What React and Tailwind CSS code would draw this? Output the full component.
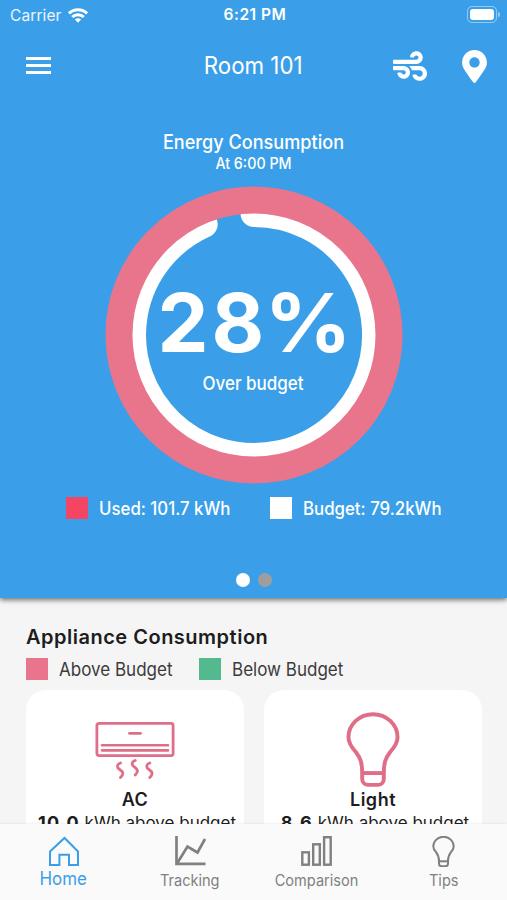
import clsx from 'clsx';
import React from 'react';
import { FaMapMarkerAlt, FaWind } from 'react-icons/fa';

const tabs = [
  { label: 'Home', icon: HomeIcon, active: true },
  { label: 'Tracking', icon: TrackingIcon },
  { label: 'Comparison', icon: BarsIcon },
  { label: 'Tips', icon: BulbIcon, iconClass: 'h-[31px] w-[23px]', stroke: 5 },
];

export default function App() {
  return (
    <div className="flex h-[900px] w-[507px] flex-col overflow-hidden bg-[#f5f5f5] font-[Inter,'Liberation_Sans',sans-serif] text-[#1d1d1d]">
      <section className="relative z-10 flex h-[598px] shrink-0 flex-col bg-[#3a9fe8] text-white shadow-[0_2px_5px_rgba(0,0,0,0.55)]">
        <StatusBar />
        <header className="grid h-[72px] grid-cols-[1fr_auto_1fr] items-center pr-5 pl-[26px]">
          <button className="mb-px flex w-[25px] flex-col gap-[4px]">
            <span className="h-[3px] bg-white" />
            <span className="h-[3px] bg-white" />
            <span className="h-[3px] bg-white" />
          </button>
          <h1 className="mr-[7px] scale-x-[0.93] text-[24px]">Room 101</h1>
          <div className="flex items-center justify-end gap-[35px]">
            <FaWind className="h-[34px] w-[34px]" />
            <FaMapMarkerAlt className="h-[33px] w-[25px]" />
          </div>
        </header>
        <div className="mt-[28px] text-center">
          <h2 className="scale-x-[0.92] text-[19.7px] leading-[25px] font-[450]">Energy Consumption</h2>
          <p className="scale-x-[0.92] text-[15.5px] leading-[18px] font-[450]">At 6:00 PM</p>
        </div>
        <Gauge />
        <div className="mt-[12px] flex h-[24px] items-center pl-[66px] text-[18.3px] font-[450]">
          <Legend color="bg-[#f54564]" label="Used: 101.7 kWh" width="w-[171px]" />
          <div className="w-[33px]" />
          <Legend color="bg-white" label="Budget: 79.2kWh" width="w-[171px]" />
        </div>
        <div className="mt-[53px] flex justify-center gap-[8px]">
          <span className="h-[14px] w-[14px] rounded-full bg-white" />
          <span className="h-[14px] w-[14px] rounded-full bg-[#9e9e9e]" />
        </div>
      </section>

      <section className="min-h-0 flex-1 overflow-hidden px-[26px] pt-[25px]">
        <h2 className="text-[20px] leading-[28px] font-semibold tracking-[0.5px]">Appliance Consumption</h2>
        <div className="mt-[6px] flex h-[24px] items-center text-[18.5px] text-[#3c3c3c]">
          <Legend color="bg-[#e8758c]" label="Above Budget" width="w-[147px]" />
          <div className="w-[26px]" />
          <Legend color="bg-[#52ba8e]" label="Below Budget" width="w-[147px]" />
        </div>
        <div className="mt-[9px] flex gap-[20px]">
          <ApplianceCard name="AC" amount="10.0" icon={<AcIcon />} />
          <ApplianceCard name="Light" amount="8.6" icon={<BulbIcon className="h-[75px] w-[54px] text-[#e06e88]" stroke={4} />} />
        </div>
      </section>

      <nav className="relative z-10 flex h-[76px] shrink-0 bg-[#fafafa] shadow-[0_-1px_2px_rgba(0,0,0,0.06)]">
        {tabs.map((tab) => (
          <Tab key={tab.label} {...tab} />
        ))}
      </nav>
    </div>
  );
}

function StatusBar() {
  return (
    <div className="grid h-[30px] grid-cols-3 items-center pr-[7px] pl-[10px] text-[15.5px]">
      <div className="flex items-center gap-[6px]">
        <span className="pt-px tracking-[0.1px] text-white/90">Carrier</span>
        <svg className="h-[15px] w-[20px]" viewBox="0 0 20 15" fill="none" stroke="currentColor" strokeWidth="3">
          <path d="M1 5.4a12.8 12.8 0 0 1 18 0" />
          <path d="M4.2 9a8.3 8.3 0 0 1 11.6 0" />
          <path d="M10 14.8 6.9 11.6a4.4 4.4 0 0 1 6.2 0z" fill="currentColor" stroke="none" />
        </svg>
      </div>
      <span className="text-center font-semibold tracking-[0.5px]">6:21 PM</span>
      <div className="flex items-center justify-end gap-[1px] pb-[2px]">
        <div className="h-[17px] w-[30px] rounded-[5px] border border-white/45 p-[2px]">
          <div className="h-full rounded-[3px] bg-white" />
        </div>
        <span className="h-[5px] w-[2px] rounded-r bg-white/45" />
      </div>
    </div>
  );
}

function Gauge() {
  return (
    <div className="mt-[13px] grid h-[298px] place-items-center">
      <svg className="col-start-1 row-start-1 h-[298px] w-[298px]" viewBox="-149 -149 298 298" fill="none">
        <path d="M0 -121.5A121.5 121.5 0 1 1 -49.8 -110.8" stroke="#fff" strokeWidth="27" strokeLinecap="round" />
        <circle r="135" stroke="#e8758c" strokeWidth="27" />
      </svg>
      <div className="col-start-1 row-start-1 pt-[10px] text-center">
        <div className="pl-[3px] text-[81px] leading-[80px] font-bold tracking-[3px]">
          28<span className="inline-block scale-x-[1.06]">%</span>
        </div>
        <div className="mt-[6px] scale-x-[0.92] text-[18.5px] leading-[28px] font-[450]">Over budget</div>
      </div>
    </div>
  );
}

function Legend({ color, label, width }) {
  return (
    <div className={clsx('flex items-center gap-[11px]', width)}>
      <span className={clsx('h-[22px] w-[22px] shrink-0', color)} />
      <span className="origin-left scale-x-[0.92] leading-[22px] whitespace-nowrap">{label}</span>
    </div>
  );
}

function ApplianceCard({ name, amount, icon }) {
  return (
    <div className="flex h-[180px] w-[218px] shrink-0 flex-col items-center rounded-[20px] bg-white pt-[21px]">
      <div className="flex h-[76px] items-center">{icon}</div>
      <div className="text-[18px] leading-[26px] font-semibold tracking-[0.5px]">{name}</div>
      <div className="pl-[4px] text-[17px] leading-[20px] whitespace-nowrap">
        <b className="text-[18px] font-bold tracking-[1.2px]">{amount}</b> kWh above budget
      </div>
    </div>
  );
}

function Tab({ label, icon: Icon, active, iconClass = 'h-[31px] w-[31px]', stroke }) {
  return (
    <button className={clsx('flex flex-1 flex-col items-center pt-[11px]', active ? 'text-[#3a9fe8]' : 'text-[#808080]')}>
      <div className="flex h-[32px] items-center">
        <Icon className={iconClass} stroke={stroke} />
      </div>
      <span className={clsx('scale-x-[0.94] leading-[24px]', active ? 'text-[18px]' : 'mt-[2px] text-[15.5px]')}>{label}</span>
    </button>
  );
}

function AcIcon() {
  return (
    <svg className="mt-[2px] h-[60px] w-[80px] text-[#e06e88]" viewBox="0 0 80 60" fill="none" stroke="currentColor" strokeWidth="2.8" strokeLinecap="round">
      <rect x="1.9" y="3.4" width="76.2" height="32.2" rx="2" />
      <path d="M34.5 13.3h11" />
      <path d="M7 25.2h66M7 30.4h66" strokeWidth="2.6" />
      <path d="M25.5 43c-4 1.5-4 4.5-.8 6.5 4 2.5 4 5 .8 8" />
      <path d="M40.2 40.5c-4 1.5-4 4.5-.8 6.5 4 2.5 4 5 .8 8" />
      <path d="M54.8 43c-4 1.5-4 4.5-.8 6.5 4 2.5 4 5 .8 8" />
    </svg>
  );
}

function BulbIcon({ className, stroke }) {
  return (
    <svg className={className} viewBox="0 0 55 76" fill="none" stroke="currentColor" strokeWidth={stroke}>
      <path d="M16.5 62c0-10-1.5-15-6.5-21.5C5 35 2.5 31 2.5 25.5a25 23.5 0 0 1 50 0c0 5.5-2.5 9.5-7.5 15-5 6.5-6.5 11.5-6.5 21.5v6a6 6 0 0 1-6 6h-10a6 6 0 0 1-6-6z" />
      <path d="M16.5 62h22" />
    </svg>
  );
}

function HomeIcon({ className }) {
  return (
    <svg className={className} viewBox="0 0 31 31" fill="none" stroke="currentColor" strokeWidth="2">
      <path d="M2 15.5 16.5 2l13.5 13.5v13.5h-9V18.7h-9.6v10.3H2z" />
    </svg>
  );
}

function TrackingIcon({ className }) {
  return (
    <svg className={className} viewBox="0 0 31 31" fill="none" stroke="currentColor" strokeWidth="2.7">
      <path d="M1.5 0v27.8H30.5" />
      <path d="M2 27.5 12.5 10.5l10 6L30 3" />
    </svg>
  );
}

function BarsIcon({ className }) {
  return (
    <svg className={className} viewBox="0 0 31 31" fill="none" stroke="currentColor" strokeWidth="2.4">
      <rect x="1.3" y="16.3" width="6.6" height="12.4" />
      <rect x="12.2" y="8.3" width="6.6" height="20.4" />
      <rect x="23.1" y="1.2" width="6.6" height="27.5" />
    </svg>
  );
}
